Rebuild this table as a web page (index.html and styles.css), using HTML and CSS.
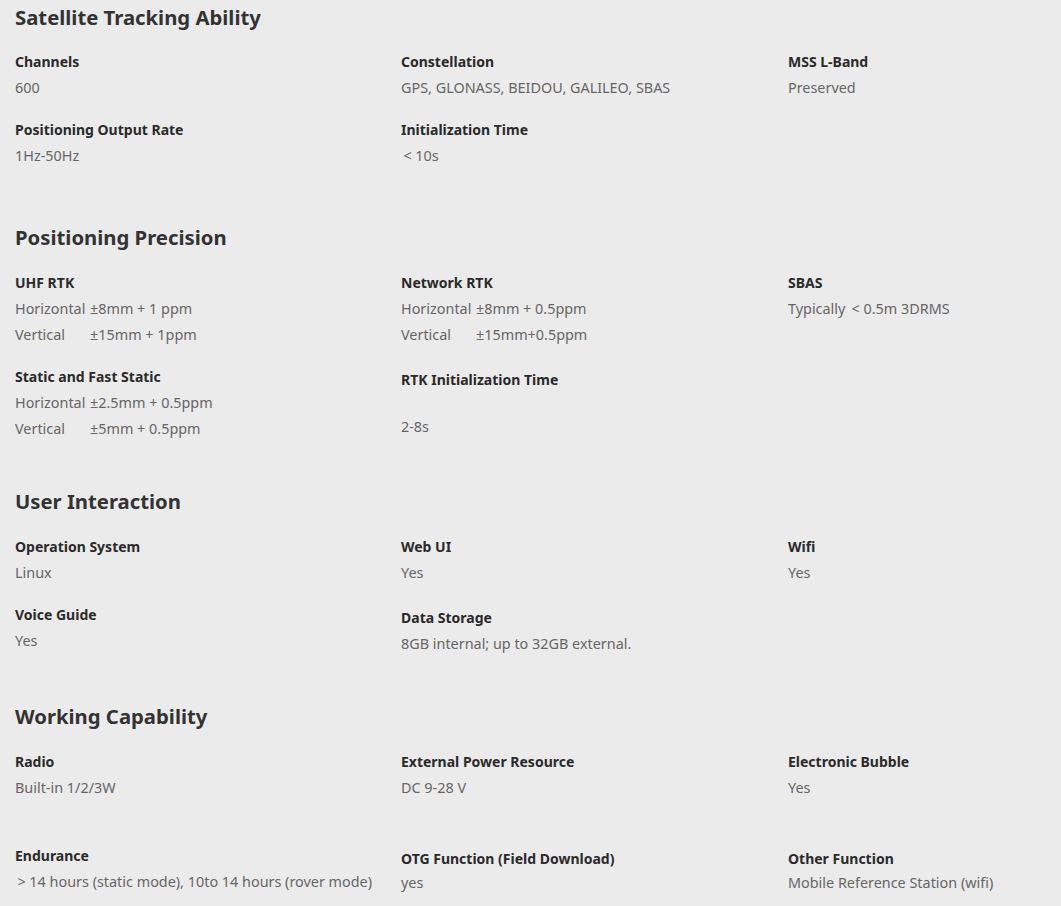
FILE: index.html
```html
<!DOCTYPE html>
<html>
<head>
<meta charset="utf-8">
<link rel="stylesheet" href="styles.css">
</head>
<body>
<div class="page">
  <section class="sec sec-first">
    <h2 class="title">Satellite Tracking Ability</h2>
    <div class="grid">
      <div class="item"><div class="label">Channels</div><div class="val">600</div></div>
      <div class="item"><div class="label">Constellation</div><div class="val">GPS, GLONASS, BEIDOU, GALILEO, SBAS</div></div>
      <div class="item"><div class="label">MSS L-Band</div><div class="val">Preserved</div></div>
      <div class="item"><div class="label">Positioning Output Rate</div><div class="val">1Hz-50Hz</div></div>
      <div class="item"><div class="label">Initialization Time</div><div class="val">&thinsp;&lt; 10s</div></div>
    </div>
  </section>

  <section class="sec sec-wide">
    <h2 class="title">Positioning Precision</h2>
    <div class="grid">
      <div class="item"><div class="label">UHF RTK</div>
        <div class="val"><span class="k">Horizontal</span>±8mm + 1 ppm</div>
        <div class="val"><span class="k">Vertical</span>±15mm + 1ppm</div></div>
      <div class="item"><div class="label">Network RTK</div>
        <div class="val"><span class="k">Horizontal</span>±8mm + 0.5ppm</div>
        <div class="val"><span class="k">Vertical</span>±15mm+0.5ppm</div></div>
      <div class="item"><div class="label">SBAS</div><div class="val">Typically &thinsp;&lt; 0.5m 3DRMS</div></div>
      <div class="item"><div class="label">Static and Fast Static</div>
        <div class="val"><span class="k">Horizontal</span>±2.5mm + 0.5ppm</div>
        <div class="val"><span class="k">Vertical</span>±5mm + 0.5ppm</div></div>
      <div class="item shift"><div class="label">RTK Initialization Time</div><div class="val gap">2-8s</div></div>
    </div>
  </section>

  <section class="sec">
    <h2 class="title">User Interaction</h2>
    <div class="grid">
      <div class="item"><div class="label">Operation System</div><div class="val">Linux</div></div>
      <div class="item"><div class="label">Web UI</div><div class="val">Yes</div></div>
      <div class="item"><div class="label">Wifi</div><div class="val">Yes</div></div>
      <div class="item"><div class="label">Voice Guide</div><div class="val">Yes</div></div>
      <div class="item shift"><div class="label">Data Storage</div><div class="val">8GB internal; up to 32GB external.</div></div>
    </div>
  </section>

  <section class="sec">
    <h2 class="title">Working Capability</h2>
    <div class="grid">
      <div class="item tall"><div class="label">Radio</div><div class="val">Built-in 1/2/3W</div></div>
      <div class="item tall"><div class="label">External Power Resource</div><div class="val">DC 9-28 V</div></div>
      <div class="item tall"><div class="label">Electronic Bubble</div><div class="val">Yes</div></div>
      <div class="item"><div class="label">Endurance</div><div class="val">&thinsp;&gt; 14 hours (static mode), 10to 14 hours (rover mode)</div></div>
      <div class="item shift tight"><div class="label">OTG Function (Field Download)</div><div class="val">yes</div></div>
      <div class="item shift tight"><div class="label">Other Function</div><div class="val">Mobile Reference Station (wifi)</div></div>
    </div>
  </section>
</div>
</body>
</html>
```
FILE: styles.css
```css
html, body {
  margin: 0;
  padding: 0;
  background: #ebebeb;
}
body {
  font-family: "Noto Sans", "Open Sans", sans-serif;
  color: #333;
}
.page {
  padding: 0 15px;
}
.sec {
  padding-top: 42px;
}
.sec-first {
  padding-top: 0;
}
.sec-wide {
  padding-top: 51px;
}
.title {
  margin: 0 0 16px 0;
  font-size: 20.3px;
  line-height: 34px;
  font-weight: 700;
  color: #333;
}
.sec-first .title {
  margin-bottom: 15px;
}
.grid {
  display: grid;
  grid-template-columns: 386px 387px 1fr;
  row-gap: 16px;
  align-items: start;
}
.label {
  font-size: 14px;
  line-height: 26px;
  font-weight: 700;
  color: #2a2a2a;
}
.val {
  font-size: 14.4px;
  line-height: 26px;
  color: #666;
}
.k {
  display: inline-block;
  width: 75px;
}
.shift {
  padding-top: 3px;
}
.gap {
  margin-top: 21px;
}
.tall {
  padding-bottom: 26px;
}
.tight .val {
  line-height: 22px;
}
```
